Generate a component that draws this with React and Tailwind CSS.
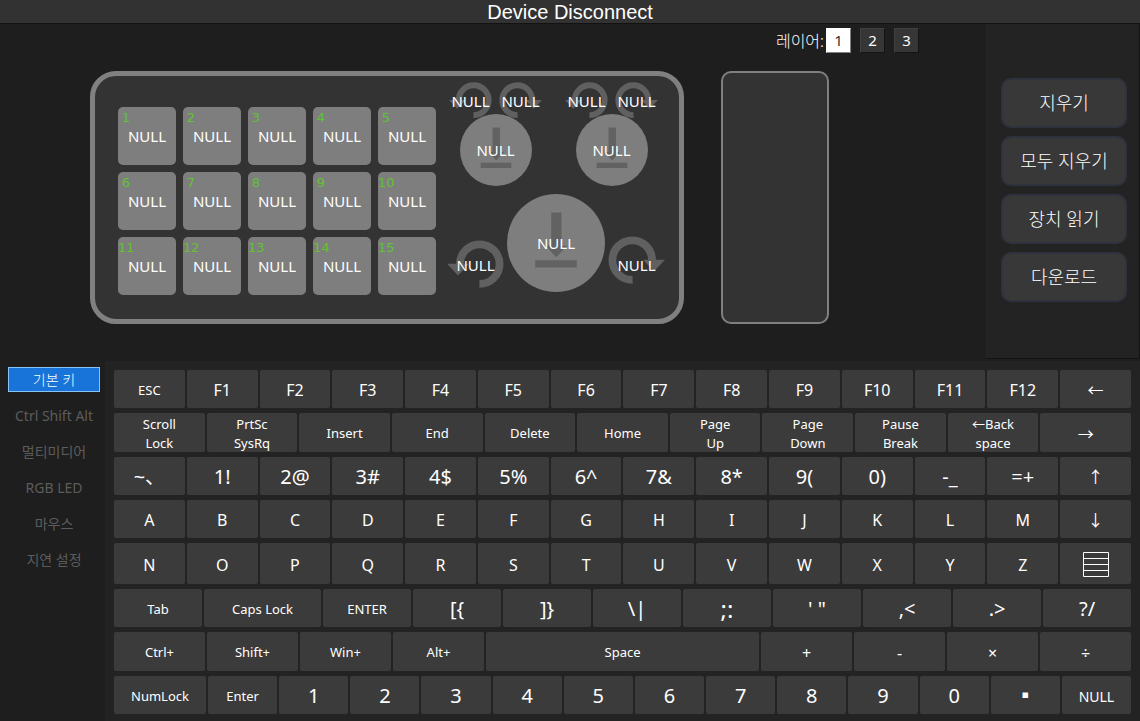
import { useState } from "react";

const SIZES = {
  sm: "text-[13px] leading-[19px]",
  md: "text-[14px] leading-[19px]",
  lg: "text-[16px] leading-[22px]",
  xl: "text-[20px] leading-[26px]",
  xxl: "text-[24px] leading-[26px]",
};

const k = (label, size = "sm", grow = "grow") => ({ label, size, grow });
const many = (text, size) => text.split(" ").map((label) => k(label, size));

const MenuGlyph = () => (
  <svg viewBox="0 0 26 26" className="h-[26px] w-[26px]" fill="none" stroke="white" strokeWidth="1">
    <path d="M0.5 0.5H25.5V24.5H0.5ZM0.5 6.5H25.5M0.5 12.5H25.5M0.5 18.5H25.5" />
  </svg>
);

const ROWS = [
  { height: "h-[38px]", keys: [k("ESC"), ...many("F1 F2 F3 F4 F5 F6 F7 F8 F9 F10 F11 F12 ←", "lg")] },
  {
    height: "h-[39px]",
    keys: [
      k("Scroll\nLock"), k("PrtSc\nSysRq"), k("Insert"), k("End"), k("Delete"), k("Home"),
      k("Page\nUp"), k("Page\nDown"), k("Pause\nBreak"), k("←Back\nspace"), k("→", "lg"),
    ],
  },
  { height: "h-[38px]", keys: [...many("~、 1! 2@ 3# 4$ 5% 6^ 7& 8* 9( 0) -_ =+", "xl"), k("↑", "lg")] },
  { height: "h-[38px]", keys: many("A B C D E F G H I J K L M ↓", "lg") },
  { height: "h-[41px]", keys: [...many("N O P Q R S T U V W X Y Z", "lg"), { ...k("Menu"), glyph: true }] },
  {
    height: "h-[38px]",
    keys: [
      k("Tab"), k("Caps Lock", "sm", "grow-[1.33]"), k("ENTER"),
      ...many("[{ ]} \\|", "xl"), k(";:", "xxl"), k("' \"", "xl"), ...many(",< .> ?/", "xl"),
    ],
  },
  {
    height: "h-[39px]",
    keys: [
      k("Ctrl+"), k("Shift+"), k("Win+"), k("Alt+"), k("Space", "sm", "grow-3"),
      ...many("+ - × ÷", "lg"),
    ],
  },
  {
    height: "h-[38px]",
    keys: [k("NumLock", "sm", "grow-[1.33]"), k("Enter"), ...many("1 2 3 4 5 6 7 8 9 0 ▪", "xl"), k("NULL", "md")],
  },
];

const TABS = ["기본 키", "Ctrl Shift Alt", "멀티미디어", "RGB LED", "마우스", "지연 설정"];
const ACTIONS = ["지우기", "모두 지우기", "장치 읽기", "다운로드"];

function Turn({ right = false, large = false }) {
  return (
    <button
      type="button"
      className={`relative grid place-items-center ${large ? "h-[49px] w-[57px]" : "h-[37px] w-[43px]"} ${
        large ? (right ? "mt-[42px]" : "mt-[46px]") : ""
      }`}
    >
      <svg
        viewBox="0 0 44 37"
        className={`col-start-1 row-start-1 h-full w-full ${right ? "-scale-x-100" : ""}`}
        aria-hidden="true"
      >
        <path d="M25 33.5A15.3 15.3 0 1 0 10 18.5" fill="none" stroke="#606060" strokeWidth="6" />
        <path d="M0 18H17L8.5 27Z" fill="#606060" />
      </svg>
      <span className={`z-10 col-start-1 row-start-1 text-[15px] leading-5 ${large && right ? "pt-2" : ""}`}>
        NULL
      </span>
    </button>
  );
}

function Knob({ large = false }) {
  return (
    <button
      type="button"
      className={`relative grid place-items-center rounded-full bg-[#7e7e7e] ${
        large ? "h-[98px] w-[98px]" : "-mt-[5px] h-[72px] w-[72px]"
      }`}
    >
      <svg viewBox="0 0 72 72" className="col-start-1 row-start-1 h-full w-full" fill="#626262" aria-hidden="true">
        <path d="M32.5 13.5H40V38H44L36.2 46.5L28.4 38H32.5ZM20.7 48.7H51.3V54H20.7Z" />
      </svg>
      <span className="z-10 col-start-1 row-start-1 text-[15px] leading-5">NULL</span>
    </button>
  );
}

function SmallEncoder() {
  return (
    <div className="flex flex-col items-center">
      <div className="flex gap-[7px]">
        <Turn />
        <Turn right />
      </div>
      <Knob />
    </div>
  );
}

function Board() {
  return (
    <div className="flex shrink-0 rounded-[26px] border-[5px] border-[#808080] bg-[#333333] pr-[14px] pb-6 pl-[23px]">
      <div className="mt-[31px] grid grid-cols-5 content-start gap-[7px]">
        {Array.from({ length: 15 }, (_, i) => (
          <button key={i} type="button" className="relative h-[58px] w-[58px] rounded-[5px] bg-[#7e7e7e] text-[15px] leading-5">
            <span className="absolute top-[3px] left-0 w-4 text-center font-['DejaVu_Sans',sans-serif] text-[13px] leading-4 text-[#62c332]">
              {i + 1}
            </span>
            NULL
          </button>
        ))}
      </div>
      <div className="mt-[6px] ml-[11px] flex flex-col gap-2">
        <div className="flex gap-[23px] pl-[2px]">
          <SmallEncoder />
          <SmallEncoder />
        </div>
        <div className="flex items-start gap-[3px]">
          <Turn large />
          <Knob large />
          <Turn large right />
        </div>
      </div>
    </div>
  );
}

export default function App() {
  const [layer, setLayer] = useState(1);
  const [tab, setTab] = useState(0);

  return (
    <div className="flex min-h-screen flex-col bg-[#1e1e1e] font-['Noto_Sans','Noto_Sans_CJK_KR',sans-serif] text-white">
      <header className="border-b border-[#121212] bg-[#323232] pt-[2px]">
        <h1 className="text-center font-['Liberation_Sans',sans-serif] text-[20px] leading-[21px]">Device Disconnect</h1>
      </header>

      <div className="flex">
        <main className="min-w-0 grow pt-1 pb-[37px]">
          <div className="flex items-center justify-end pr-[67px]">
            <span className="mr-[2px] text-[16px] leading-6 font-light">레이어:</span>
            <div className="flex gap-[9px]">
              {[1, 2, 3].map((n) => (
                <button
                  key={n}
                  type="button"
                  aria-pressed={layer === n}
                  onClick={() => setLayer(n)}
                  className={`h-[25px] w-[25px] border text-[15px] leading-[23px] ${
                    layer === n
                      ? "border-t-white border-r-[#808080] border-b-[#808080] border-l-white bg-white text-[#333333]"
                      : "border-t-[#404040] border-r-[#141414] border-b-[#141414] border-l-[#404040] bg-[#363636]"
                  }`}
                >
                  {n}
                </button>
              ))}
            </div>
          </div>
          <div className="mt-[18px] flex gap-[37px] pl-[90px]">
            <Board />
            <div className="w-[108px] rounded-[10px] border-2 border-[#808080] bg-[#333333]" />
          </div>
        </main>

        <aside className="mb-[2px] flex w-[154px] shrink-0 flex-col gap-2 border border-t-0 border-[#121212] border-l-[#272727] bg-[#232323] pt-[54px] pr-3 pl-[14px]">
          {ACTIONS.map((label) => (
            <button
              key={label}
              type="button"
              className="h-[50px] rounded-[10px] border-2 border-[#2e323c] bg-[#383838] text-[18px] leading-6 font-light"
            >
              {label}
            </button>
          ))}
        </aside>
      </div>

      <div className="flex grow">
        <nav className="flex w-[105px] shrink-0 flex-col gap-[11px] pt-[6px] pr-[5px] pl-2">
          {TABS.map((label, i) => (
            <button
              key={label}
              type="button"
              onClick={() => setTab(i)}
              className={`h-[25px] border text-[14px] leading-[23px] whitespace-nowrap ${
                tab === i ? "border-[#8ac4f5] bg-[#1874d8] font-light" : "border-transparent text-[#5c5c5c]"
              }`}
            >
              {label}
            </button>
          ))}
        </nav>

        <section className="flex min-w-0 grow flex-col gap-[5px] bg-[#232323] px-[9px] pt-[9px] pb-[7px]">
          {ROWS.map((row, r) => (
            <div key={r} className={`flex gap-[2px] ${row.height}`}>
              {row.keys.map((key) => (
                <button
                  key={key.label}
                  type="button"
                  aria-label={key.glyph ? key.label : undefined}
                  className={`flex min-w-0 basis-0 items-center justify-center rounded-[2px] bg-[#3b3b3b] pt-[2px] whitespace-pre-line ${key.grow} ${SIZES[key.size]}`}
                >
                  {key.glyph ? <MenuGlyph /> : key.label}
                </button>
              ))}
            </div>
          ))}
        </section>
      </div>
    </div>
  );
}
